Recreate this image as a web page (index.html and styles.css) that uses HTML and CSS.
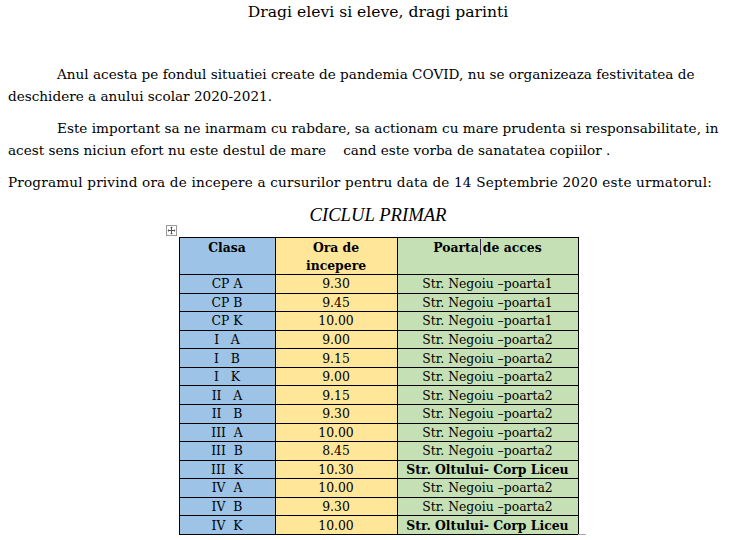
FILE: index.html
```html
<!DOCTYPE html>
<html lang="ro">
<head>
<meta charset="utf-8">
<title>Dragi elevi si eleve, dragi parinti</title>
<link rel="stylesheet" href="styles.css">
</head>
<body>
<div class="page">
  <h1 class="title">Dragi elevi si eleve, dragi parinti</h1>
  <p class="para indent">Anul acesta pe fondul situatiei create de pandemia COVID, nu se organizeaza festivitatea de<br>deschidere a anului scolar 2020-2021.</p>
  <p class="para indent">Este important sa ne inarmam cu rabdare, sa actionam cu mare prudenta si responsabilitate, in<br>acest sens niciun efort nu este destul de mare&nbsp;&nbsp;&nbsp; cand este vorba de sanatatea copiilor .</p>
  <p class="para wide">Programul privind ora de incepere a cursurilor pentru data de 14 Septembrie 2020 este urmatorul:</p>
  <h2 class="section">CICLUL PRIMAR</h2>
  <div class="table-wrap">
    <span class="move-handle">
      <svg width="11" height="11" viewBox="0 0 11 11">
        <rect x="0.5" y="0.5" width="10" height="10" fill="#fff" stroke="#9a9a9a"/>
        <path d="M5.5 2v7M2 5.5h7" stroke="#555" stroke-width="1"/>
        <path d="M5.5 1.6l-1.4 1.4h2.8zM5.5 9.4l-1.4-1.4h2.8zM1.6 5.5l1.4-1.4v2.8zM9.4 5.5l-1.4-1.4v2.8z" fill="#555"/>
      </svg>
    </span>
    <table class="schedule">
      <colgroup>
        <col class="c1"><col class="c2"><col class="c3">
      </colgroup>
      <thead>
        <tr>
          <th class="blue">Clasa</th>
          <th class="yellow">Ora de<br>incepere</th>
          <th class="green">Poarta<span class="caret"></span>de acces</th>
        </tr>
      </thead>
      <tbody>
        <tr><td class="blue">CP A</td><td class="yellow">9.30</td><td class="green">Str. Negoiu –poarta1</td></tr>
        <tr><td class="blue">CP B</td><td class="yellow">9.45</td><td class="green">Str. Negoiu –poarta1</td></tr>
        <tr><td class="blue">CP K</td><td class="yellow">10.00</td><td class="green">Str. Negoiu –poarta1</td></tr>
        <tr><td class="blue">I   A</td><td class="yellow">9.00</td><td class="green">Str. Negoiu –poarta2</td></tr>
        <tr><td class="blue">I   B</td><td class="yellow">9.15</td><td class="green">Str. Negoiu –poarta2</td></tr>
        <tr><td class="blue">I   K</td><td class="yellow">9.00</td><td class="green">Str. Negoiu –poarta2</td></tr>
        <tr><td class="blue">II   A</td><td class="yellow">9.15</td><td class="green">Str. Negoiu –poarta2</td></tr>
        <tr><td class="blue">II   B</td><td class="yellow">9.30</td><td class="green">Str. Negoiu –poarta2</td></tr>
        <tr><td class="blue">III  A</td><td class="yellow">10.00</td><td class="green">Str. Negoiu –poarta2</td></tr>
        <tr><td class="blue">III  B</td><td class="yellow">8.45</td><td class="green">Str. Negoiu –poarta2</td></tr>
        <tr><td class="blue">III  K</td><td class="yellow">10.30</td><td class="green strong">Str. Oltului- Corp Liceu</td></tr>
        <tr><td class="blue">IV  A</td><td class="yellow">10.00</td><td class="green">Str. Negoiu –poarta2</td></tr>
        <tr><td class="blue">IV  B</td><td class="yellow">9.30</td><td class="green">Str. Negoiu –poarta2</td></tr>
        <tr><td class="blue">IV  K</td><td class="yellow">10.00</td><td class="green strong">Str. Oltului- Corp Liceu</td></tr>
      </tbody>
    </table>
    <span class="resize-handle"></span>
  </div>
</div>
</body>
</html>
```

FILE: styles.css
```css
html {
  overflow: hidden;
  background: #fff;
}
body {
  margin: 0;
  padding: 0 0 0 8px;
  font-family: "DejaVu Serif", "Liberation Serif", serif;
  color: #000;
}
.page {
  width: 740px;
}
.title {
  margin: 0;
  height: 24px;
  font-size: 15.6px;
  font-weight: normal;
  line-height: 24px;
  text-align: center;
}
.para {
  margin: 0 0 10px;
  font-size: 13.6px;
  line-height: 22px;
  white-space: nowrap;
}
.title + .para {
  margin-top: 39px;
}
.indent {
  text-indent: 49px;
}
.wide {
  letter-spacing: 0.18px;
}
.section {
  margin: 8px 0 0;
  font-family: "Liberation Serif", "Times New Roman", serif;
  font-size: 18.67px;
  font-style: italic;
  font-weight: normal;
  line-height: 24px;
  text-align: center;
}
.table-wrap {
  position: relative;
  width: 399px;
  margin: 10px auto 0;
}
.move-handle {
  position: absolute;
  left: -13px;
  top: -12px;
  width: 11px;
  height: 11px;
}
.move-handle svg {
  display: block;
}
.resize-handle {
  position: absolute;
  right: -8px;
  bottom: -7px;
  width: 6px;
  height: 6px;
  border: 1px solid #a6a6a6;
  background: #fff;
}
.schedule {
  border-collapse: collapse;
  table-layout: fixed;
  width: 399px;
  font-size: 12.4px;
}
.c1 { width: 96px; }
.c2 { width: 122px; }
.c3 { width: 181px; }
.schedule th,
.schedule td {
  border: 1px solid #000;
  padding: 0 2px;
  text-align: center;
  white-space: pre;
}
.schedule th {
  height: 32px;
  vertical-align: top;
  font-weight: bold;
  line-height: 17.5px;
  padding-top: 1px;
}
.schedule td {
  height: 17.57px;
  line-height: 17px;
  vertical-align: middle;
}
.schedule td.strong {
  font-weight: bold;
}
.blue { background: #9dc3e6; }
.yellow { background: #ffe699; }
.green { background: #c5e0b4; }
.caret {
  display: inline-block;
  width: 1px;
  height: 16px;
  margin: 0 2px 0 1px;
  background: #3a1f4f;
  vertical-align: -3px;
}
```
